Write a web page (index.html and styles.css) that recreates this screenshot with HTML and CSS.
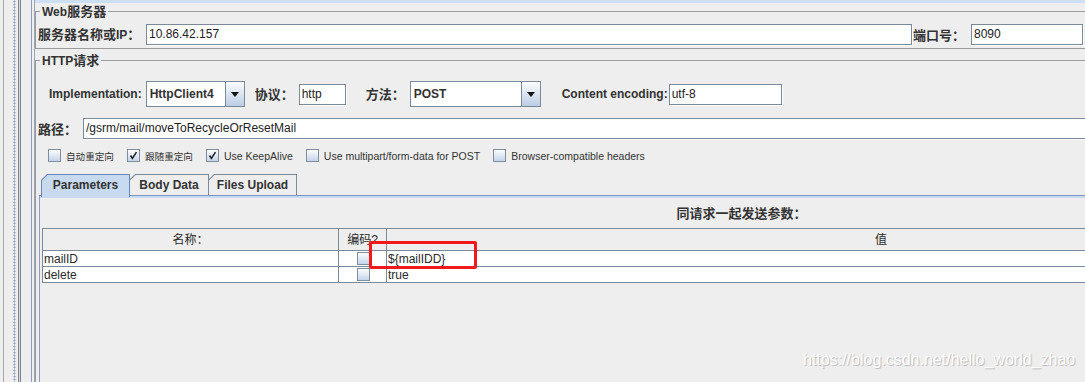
FILE: index.html
```html
<!DOCTYPE html>
<html lang="zh-CN">
<head>
	<meta charset="UTF-8">
	<title>HTTP请求</title>
	<link rel="stylesheet" href="styles.css">
</head>
<body>
	<div id="window">
		<div class="gutter"><div class="dots"></div></div>

		<div class="main">
			<div class="sel-strip"></div>

			<!-- Web服务器 -->
			<fieldset class="group web-group">
				<legend>Web<span class="cn">服务器</span></legend>
				<div class="form-row">
					<span class="label server-label"><span class="cn">服务器名称或</span>IP<span class="cn">：</span></span>
					<div class="field server">10.86.42.157</div>
					<span class="label cn port-label">端口号：</span>
					<div class="field port">8090</div>
				</div>
			</fieldset>

			<!-- HTTP请求 -->
			<fieldset class="group http-group">
				<legend>HTTP<span class="cn">请求</span></legend>

				<div class="impl-row">
					<span class="label">Implementation:</span>
					<div class="combo impl">
						<span class="combo-text">HttpClient4</span>
						<span class="combo-btn"></span>
					</div>
					<span class="label cn proto-label">协议：</span>
					<div class="field protocol">http</div>
					<span class="label cn method-label">方法：</span>
					<div class="combo method">
						<span class="combo-text">POST</span>
						<span class="combo-btn"></span>
					</div>
					<span class="label enc-label">Content encoding:</span>
					<div class="field encoding">utf-8</div>
				</div>

				<div class="form-row path-row">
					<span class="label cn">路径：</span>
					<div class="field path">/gsrm/mail/moveToRecycleOrResetMail</div>
				</div>

				<div class="checks">
					<label class="check"><span class="box"></span><span class="cn">自动重定向</span></label>
					<label class="check"><span class="box on"><svg viewBox="0 0 13 13"><polyline points="3,6.5 5.2,10 10,2.5"/></svg></span><span class="cn">跟随重定向</span></label>
					<label class="check"><span class="box on"><svg viewBox="0 0 13 13"><polyline points="3,6.5 5.2,10 10,2.5"/></svg></span>Use KeepAlive</label>
					<label class="check"><span class="box"></span>Use multipart/form-data for POST</label>
					<label class="check"><span class="box"></span>Browser-compatible headers</label>
				</div>

				<div class="tabs">
					<div class="tab active p-tab"><span>Parameters</span></div>
					<div class="tab b-tab"><span>Body Data</span></div>
					<div class="tab f-tab"><span>Files Upload</span></div>
				</div>

				<div class="tab-panel">
					<div class="panel-title">同请求一起发送参数：</div>
					<div class="table-wrap">
						<table class="params">
							<colgroup>
								<col class="c-name">
								<col class="c-enc">
								<col class="c-val">
							</colgroup>
							<tr>
								<th>名称：</th>
								<th>编码?</th>
								<th>值</th>
							</tr>
							<tr>
								<td>mailID</td>
								<td class="enc"><span class="box"></span></td>
								<td>${mailIDD}</td>
							</tr>
							<tr>
								<td>delete</td>
								<td class="enc"><span class="box"></span></td>
								<td>true</td>
							</tr>
						</table>
						<div class="mark"></div>
					</div>
				</div>
			</fieldset>
		</div>
	</div>

	<div class="watermark">https://blog.csdn.net/hello_world_zhao</div>
</body>
</html>
```

FILE: styles.css
```css
* {
	box-sizing: border-box;
}
html, body {
	margin: 0;
}
body {
	position: relative;
	width: 1085px;
	height: 382px;
	overflow: hidden;
	background: #eee;
	color: #333;
	font-family: "Liberation Sans", "Noto Sans CJK SC", sans-serif;
	font-size: 12px;
	line-height: 16px;
}
.cn {
	font-family: "Noto Sans CJK SC", sans-serif;
	font-size: 13px;
}

#window {
	display: flex;
	height: 382px;
}

/* 左侧分隔栏 */
.gutter {
	flex: none;
	display: flex;
	width: 35px;
	background: linear-gradient(to right,
		#eee 0 3px, #a9a9a9 3px 4px, #eee 4px 18px,
		#7d8692 18px 19px, #d6d6d6 19px 20px, #7d8692 20px 21px,
		#eee 21px 31px, #8b9bbb 31px 32px, #eee 32px 34px, #9aa6bd 34px 35px);
}
.dots {
	width: 3px;
	margin-left: 13px;
	background-image: radial-gradient(circle, #8da0c2 0.8px, transparent 1.3px);
	background-size: 3px 3px;
}

.main {
	flex: 1;
	min-width: 0;
	overflow: hidden;
}
.sel-strip {
	height: 3px;
	background: #cddff2;
}

/* 分组框 */
.group {
	min-width: 0;
	margin: 0;
	padding: 0 7px 3px 2px;
	border: 1px solid #9b9b9b;
}
.group legend {
	margin-left: 2px;
	padding: 0 2px;
	font-weight: bold;
	line-height: 16px;
}
.web-group {
	margin-right: -6px;
}
.http-group {
	margin-top: 3px;
	margin-right: -364px;
	padding-bottom: 0;
}

.form-row {
	display: flex;
	align-items: center;
}
.web-group .form-row {
	padding-top: 4px;
}
.label {
	flex: none;
	font-weight: bold;
	white-space: nowrap;
}

.field {
	height: 21px;
	padding-left: 2px;
	border: 1px solid #7a8a99;
	box-shadow: 1px 1px 0 #fff;
	background: #fff;
	color: #222;
	line-height: 19px;
	white-space: nowrap;
	overflow: hidden;
}
.server-label {
	width: 108px;
}
.server {
	flex: 1;
}
.port-label {
	width: 58px;
	margin-left: 1px;
}
.port {
	width: 112px;
}

/* Implementation 行 */
.impl-row {
	display: flex;
	align-items: center;
	height: 26px;
	margin-top: 12px;
	padding-left: 11px;
}
.combo {
	display: flex;
	height: 26px;
	border: 1px solid #7a8a99;
	background: #fff;
	font-weight: bold;
}
.combo-text {
	flex: 1;
	padding-left: 3px;
	line-height: 24px;
}
.combo-btn {
	display: flex;
	align-items: center;
	justify-content: center;
	width: 19px;
	border-left: 1px solid #7a8a99;
	background: linear-gradient(#fdfdfe, #b9cde5);
}
.combo-btn::after {
	content: "";
	border-left: 4.5px solid transparent;
	border-right: 4.5px solid transparent;
	border-top: 5px solid #111;
}
.impl {
	width: 99px;
	margin-left: 4px;
}
.proto-label {
	margin-left: 10px;
}
.protocol {
	width: 47px;
	margin-left: 5px;
}
.method-label {
	margin-left: 20px;
}
.method {
	width: 131px;
	margin-left: 5px;
}
.enc-label {
	margin-left: 21px;
}
.encoding {
	width: 113px;
	margin-left: 1px;
}

.path-row {
	margin-top: 11px;
}
.path {
	flex: 1;
	margin-left: 6px;
}

/* 复选框 */
.checks {
	display: flex;
	align-items: center;
	height: 13px;
	margin-top: 10px;
	padding-left: 10px;
	font-size: 10.5px;
}
.checks .cn {
	font-size: 9.6px;
}
.check {
	display: flex;
	align-items: center;
	gap: 5px;
	margin-right: 13px;
	white-space: nowrap;
}
.box {
	display: block;
	width: 13px;
	height: 13px;
	border: 1px solid #7f8e9e;
	background: linear-gradient(#fdfdfe, #c3d4ea);
}
.box svg {
	display: block;
	width: 11px;
	height: 11px;
	fill: none;
	stroke: #1a1a1a;
	stroke-width: 1.7;
}

/* 选项卡 */
.tabs {
	display: flex;
	height: 21px;
	margin-top: 12px;
	margin-left: 3px;
}
.tab {
	height: 21px;
	margin-right: -1px;
	padding: 1px 1px 0 1px;
	background: #7a8a99;
	clip-path: polygon(0 6px, 6px 0, 100% 0, 100% 100%, 0 100%);
	font-weight: bold;
}
.tab span {
	display: block;
	height: 100%;
	background: #eee;
	clip-path: polygon(0 5.6px, 5.6px 0, 100% 0, 100% 100%, 0 100%);
	text-align: center;
	line-height: 20px;
}
.tab.active {
	position: relative;
	z-index: 1;
	height: 23px;
	padding-bottom: 0;
	background: #6a84b4;
}
.tab.active span {
	background: #c8daf0;
}
.p-tab {
	width: 89px;
}
.b-tab {
	width: 80px;
}
.f-tab {
	width: 89px;
}

.tab-panel {
	height: 200px;
	margin-left: 1px;
	padding-left: 2px;
	border-top: 1px solid #7a95c5;
	border-left: 1px solid #8a9dc0;
	box-shadow: inset 0 2px #c8daf0;
}
.panel-title {
	margin-top: 9px;
	font-family: "Noto Sans CJK SC", sans-serif;
	font-size: 13px;
	font-weight: bold;
	text-align: center;
	line-height: 16px;
}

/* 参数表 */
.table-wrap {
	position: relative;
	margin-top: 7px;
	width: 1334px;
}
.params {
	width: 100%;
	border-collapse: collapse;
	table-layout: fixed;
	color: #2a2a2a;
}
.params .c-name {
	width: 296px;
}
.params .c-enc {
	width: 48px;
}
.params th,
.params td {
	padding: 0 0 0 1px;
	border: 1px solid #7a8a99;
	white-space: nowrap;
}
.params th {
	height: 22px;
	padding: 0;
	background: #eee;
	font-family: "Liberation Sans", "Noto Sans CJK SC", sans-serif;
	font-size: 12px;
	font-weight: normal;
	text-align: center;
}
.params td {
	height: 16px;
	background: #fff;
	line-height: 14px;
}
.params td.enc .box {
	margin: 0 auto;
}

/* 红框标注 */
.mark {
	position: absolute;
	left: 327px;
	top: 13px;
	width: 108px;
	height: 28px;
	border: 3px solid #f01a1a;
	border-radius: 2px;
}

.watermark {
	position: absolute;
	left: 803px;
	top: 352px;
	color: rgba(255, 255, 255, .95);
	font-size: 16px;
	text-shadow: 1px 1px 1px rgba(0, 0, 0, .22);
	white-space: nowrap;
}
```
